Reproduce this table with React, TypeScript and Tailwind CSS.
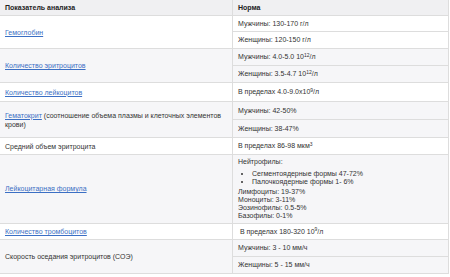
const link = "text-[#3b6fc4] underline";

function Sup({ children }: { children: React.ReactNode }) {
  return <sup className="text-[5px]">{children}</sup>;
}

type Group = {
  left: React.ReactNode;
  right: { h: string; content: React.ReactNode }[];
  gray?: boolean;
};

const groups: Group[] = [
  {
    left: <span className={link}>Гемоглобин</span>,
    right: [
      { h: "h-[16px]", content: "Мужчины: 130-170 г/л" },
      { h: "h-[17px]", content: "Женщины: 120-150 г/л" },
    ],
  },
  {
    gray: true,
    left: <span className={link}>Количество эритроцитов</span>,
    right: [
      { h: "h-[17px]", content: <>Мужчины: 4.0-5.0 10<Sup>12</Sup>/л</> },
      { h: "h-[17px]", content: <>Женщины: 3.5-4.7 10<Sup>12</Sup>/л</> },
    ],
  },
  {
    left: <span className={link}>Количество лейкоцитов</span>,
    right: [{ h: "h-[19px]", content: <>В пределах 4.0-9.0х10<Sup>9</Sup>/л</> }],
  },
  {
    gray: true,
    left: (
      <p>
        <a className={link}>Гематокрит</a> (соотношение объема плазмы и клеточных элементов крови)
      </p>
    ),
    right: [
      { h: "h-[18px]", content: "Мужчины: 42-50%" },
      { h: "h-[18px]", content: "Женщины: 38-47%" },
    ],
  },
  {
    left: "Средний объем эритроцита",
    right: [{ h: "h-[17px]", content: <>В пределах 86-98 мкм<Sup>3</Sup></> }],
  },
];

const groupsAfter: Group[] = [
  {
    left: <span className={link}>Количество тромбоцитов</span>,
    right: [{ h: "h-[16px]", content: <>&nbsp;В пределах 180-320 10<Sup>9</Sup>/л</> }],
  },
  {
    gray: true,
    left: "Скорость оседания эритроцитов (СОЭ)",
    right: [
      { h: "h-[17px]", content: "Мужчины: 3 - 10 мм/ч" },
      { h: "h-[17px]", content: "Женщины: 5 - 15 мм/ч" },
    ],
  },
];

function Row({ g }: { g: Group }) {
  return (
    <div className={`flex ${g.gray ? "bg-[#f6f6f8]" : "bg-white"}`}>
      <div className="w-[232px] shrink-0 flex items-center px-[5px] leading-[9px] border-b border-[#dddddd]">
        {g.left}
      </div>
      <div className="flex-1 flex flex-col border-l border-[#dddddd]">
        {g.right.map((r, i) => (
          <div key={i} className={`${r.h} flex items-center px-[5px] border-b border-[#dddddd]`}>
            <span>{r.content}</span>
          </div>
        ))}
      </div>
    </div>
  );
}

export default function App() {
  return (
    <div
      className="w-[450px] h-[277px] bg-white text-[#333] text-[7px] leading-[8px] overflow-hidden"
      style={{ fontFamily: '"Liberation Sans", Arial, sans-serif' }}
    >
      <div className="w-[449px] border-r border-[#dddddd]">
        <div className="flex h-[16px] bg-[#f0f0f2] font-bold text-[#222] border-b border-[#dddddd]">
          <div className="w-[232px] shrink-0 flex items-center px-[5px]">Показатель анализа</div>
          <div className="flex-1 flex items-center px-[5px] border-l border-[#dddddd]">Норма</div>
        </div>

        {groups.map((g, i) => (
          <Row key={i} g={g} />
        ))}

        <div className="flex bg-[#f6f6f8] h-[69px]">
          <div className="w-[232px] shrink-0 flex items-center px-[5px] border-b border-[#dddddd]">
            <span className={link}>Лейкоцитарная формула</span>
          </div>
          <div className="flex-1 border-l border-b border-[#dddddd] px-[5px] pt-[3px]">
            <div>Нейтрофилы:</div>
            <ul className="list-disc pl-[14px] mt-[4px] mb-[2px]">
              <li>Сегментоядерные формы 47-72%</li>
              <li>Палочкоядерные формы 1- 6%</li>
            </ul>
            <div>Лимфоциты: 19-37%</div>
            <div>Моноциты: 3-11%</div>
            <div>Эозинофилы: 0.5-5%</div>
            <div>Базофилы: 0-1%</div>
          </div>
        </div>

        {groupsAfter.map((g, i) => (
          <Row key={i} g={g} />
        ))}
      </div>
    </div>
  );
}
